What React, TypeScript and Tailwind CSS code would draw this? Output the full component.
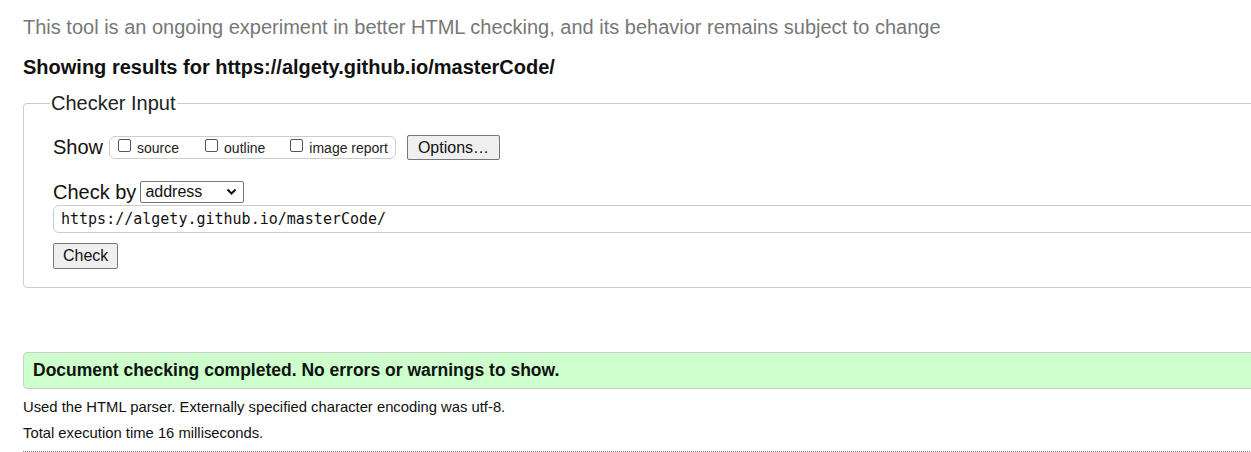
import React from "react";

export default function App() {
  return (
    <div className="w-[1251px] h-[452px] overflow-hidden bg-white" style={{ fontFamily: '"Liberation Sans", Arial, sans-serif' }}>
      <div className="w-[1400px] pl-[23px]">
        <p className="text-[20px] leading-[24px] text-[#777] pt-[15px]">
          This tool is an ongoing experiment in better HTML checking, and its behavior remains subject to change
        </p>
        <h2 className="text-[20px] leading-[24px] font-bold text-[#111] mt-[16px]">
          Showing results for https://algety.github.io/masterCode/
        </h2>
        <fieldset className="mt-[12px] border border-[#ccc] rounded-[4px] pl-[29px] pb-[18px]">
          <legend className="text-[20px] leading-[24px] text-[#222] px-[1px] ml-[-3px]">Checker Input</legend>
          <div className="flex items-center mt-[20px] h-[24px]">
            <span className="text-[20px] text-[#111] mr-[6px]">Show</span>
            <div className="flex items-center h-[23px] border border-[#ccc] rounded-[6px] pl-[8px] pr-[7px] text-[14px] text-[#222]">
              <label className="flex items-center">
                <span className="w-[13px] h-[13px] border border-[#555] rounded-[2px] mr-[6px] mt-[-4px]"></span>
                <span className="mt-[3px]">source</span>
              </label>
              <label className="flex items-center ml-[26px]">
                <span className="w-[13px] h-[13px] border border-[#555] rounded-[2px] mr-[6px] mt-[-4px]"></span>
                <span className="mt-[3px]">outline</span>
              </label>
              <label className="flex items-center ml-[25px]">
                <span className="w-[13px] h-[13px] border border-[#555] rounded-[2px] mr-[6px] mt-[-4px]"></span>
                <span className="mt-[3px]">image report</span>
              </label>
            </div>
            <button className="ml-[11px] h-[25px] px-[10px] border border-[#767676] rounded-[2px] bg-[#efefef] text-[16px] text-[#111]">
              Options…
            </button>
          </div>
          <div className="flex items-center mt-[21px] h-[23px]">
            <span className="text-[20px] text-[#111] mr-[4px]">Check by</span>
            <div className="flex items-center justify-between w-[104px] h-[22px] border border-[#767676] rounded-[2px] pl-[4px] pr-[6px] text-[16px] text-[#111]">
              <span>address</span>
              <svg width="11" height="8" viewBox="0 0 11 8">
                <path d="M1.5 1.5 L5.5 5.5 L9.5 1.5" fill="none" stroke="#111" strokeWidth="2" />
              </svg>
            </div>
          </div>
          <div className="mt-[2px] h-[28px] border border-[#ccc] rounded-[6px] flex items-center pl-[7px] text-[15px] text-[#111]" style={{ fontFamily: '"DejaVu Sans Mono", monospace' }}>
            https://algety.github.io/masterCode/
          </div>
          <button className="mt-[10px] h-[26px] px-[9px] border border-[#767676] rounded-[2px] bg-[#efefef] text-[16px] text-[#111]">
            Check
          </button>
        </fieldset>
        <div className="mt-[64px] h-[37px] bg-[#ccffcc] border border-[#ccc] rounded-[4px] flex items-center pl-[9px] text-[17.5px] font-bold text-[#111]">
          Document checking completed. No errors or warnings to show.
        </div>
        <p className="text-[14.8px] leading-[17px] text-[#111] mt-[10px]">
          Used the HTML parser. Externally specified character encoding was utf-8.
        </p>
        <p className="text-[14.8px] leading-[17px] text-[#111] mt-[9px]">
          Total execution time 16 milliseconds.
        </p>
        <div className="mt-[9px] border-t border-dotted border-[#777]"></div>
      </div>
    </div>
  );
}
